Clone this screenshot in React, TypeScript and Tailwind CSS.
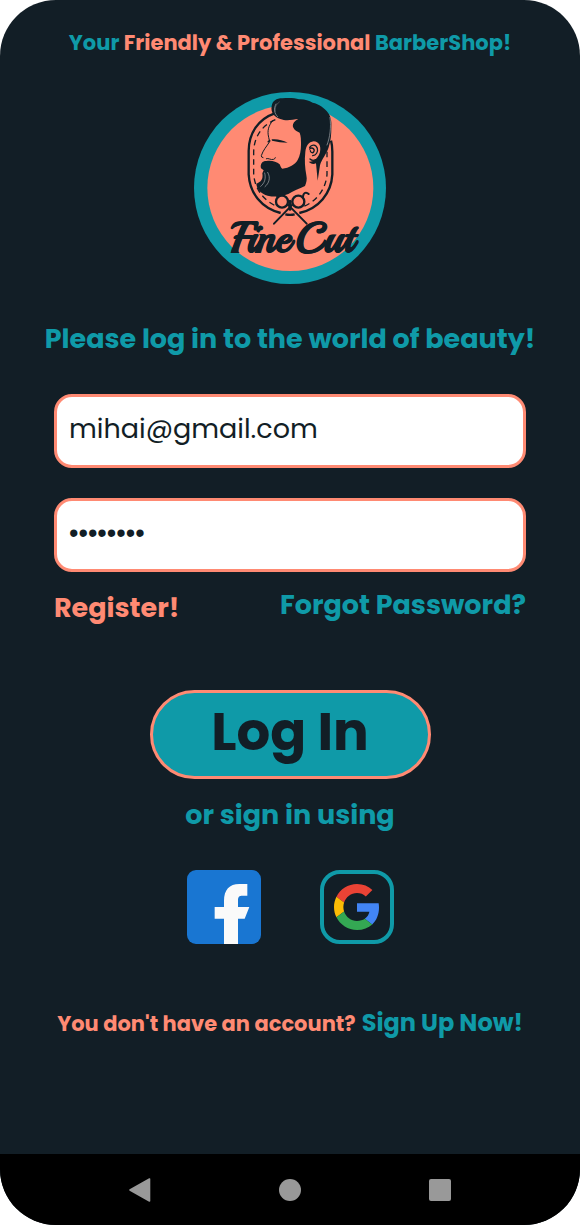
import React, { useState } from "react";

function Logo() {
  return (
    <svg viewBox="42 36 576 576" className="h-48 w-48" role="img" aria-label="FineCut barber shop">
      <circle cx="330" cy="324" r="288" fill="#0f9aa8" />
      <circle cx="331" cy="324" r="249" fill="#ff8a73" />
      {/* badge frame */}
      <g fill="none" stroke="#121e26">
        <path
          d="M284 100C235 117 206 160 206 213V283C209 340 245 385 302 399M453 182C457 196 457 205 457 215V283C454 340 416 386 358 399M316 403Q330 406 344 403"
          strokeWidth="7"
        />
        <path
          d="M286 119C244 137 221 173 221 218V283C224 325 250 362 290 379M441 215V283C438 325 412 362 372 379"
          strokeWidth="4"
          strokeDasharray="17 12"
        />
      </g>
      {/* hair and beard */}
      <path
        fill="#121e26"
        d="M275 78C277 63 289 55 307 55C326 53 345 54 357 58C372 57 386 61 398 68C417 72 434 84 444 98C454 112 455 126 454 142C454 162 453 181 446 202C439 224 425 238 420 256L413 302L408 250C398 254 391 250 386 245C404 246 415 232 420 216C424 198 417 185 401 184C386 186 378 198 376 216C373 241 375 264 379 286C382 298 379 309 375 318C357 326 341 333 325 342C306 350 284 352 263 347C243 341 230 328 229 311C243 306 250 298 247 280L251 271L243 265C240 251 247 243 259 243C273 240 289 244 299 253C302 260 303 264 307 266C328 264 345 254 353 240C360 229 363 211 363 195C363 180 363 168 359 158C352 155 343 151 339 141C337 131 344 122 355 117C337 119 319 124 301 117C285 112 271 99 275 78Z"
      />
      {/* ear */}
      <g fill="none" stroke="#121e26" strokeLinecap="round">
        <path d="M389 202C395 192 408 193 412 205C415 216 408 226 398 227M389 207C397 200 406 208 401 216C397 221 391 216 391 212" strokeWidth="4" />
        <path d="M390 237C394 241 401 242 407 239" strokeWidth="4" />
      </g>
      {/* face */}
      <g fill="none" stroke="#121e26" strokeLinecap="round" strokeLinejoin="round">
        <path d="M278 122C266 137 261 151 266 172L269 185C260 199 249 211 244 227Q243 232 249 233M259 236C266 233 272 241 281 238Q285 237 286 233" strokeWidth="3" />
        <path d="M265 185L269 182" strokeWidth="5" />
      </g>
      <path fill="#121e26" d="M275 178C290 176 308 180 323 188C307 187 292 186 276 182Z" />
      {/* highlights */}
      <g fill="none" stroke="#a9aaae" strokeLinecap="round">
        <path d="M288 72C280 86 283 101 293 110" strokeWidth="2" />
        <path d="M298 66C287 74 284 84 286 94" strokeWidth="1" />
        <path d="M450 112C454 141 450 172 441 195" strokeWidth="2" />
        <path d="M254 279C259 296 253 311 242 319M263 277C273 293 267 310 255 320" strokeWidth="2" />
      </g>
      {/* scissors */}
      <g fill="none" stroke="#121e26" strokeLinecap="round">
        <circle cx="306" cy="365" r="18" strokeWidth="7" fill="#ff8a73" />
        <circle cx="355" cy="365" r="18" strokeWidth="7" fill="#ff8a73" />
        <path d="M292 350C291 337 281 335 274 342M369 350C370 337 379 335 386 342" strokeWidth="6" />
        <path d="M323 373L380 431M338 373L282 431" strokeWidth="6" />
        <path d="M330 364V388" strokeWidth="9" />
      </g>
      <text
        x="338"
        y="517"
        textAnchor="middle"
        fill="#121e26"
        stroke="#121e26"
        strokeWidth="2"
        className="font-['Playball','Oleo_Script','Courgette','Kaushan_Script','Lobster','Liberation_Serif',serif] text-[128px] font-bold"
      >
        FineCut
      </text>
    </svg>
  );
}

function FacebookIcon() {
  return (
    <svg viewBox="0 0 222 222" className="h-[74px] w-[74px]" aria-hidden="true">
      <rect width="222" height="222" rx="27" fill="#1976d2" />
      <path
        fill="#fafafa"
        d="M111 222V146H83V111H111V92C111 60 127 42 157 42H181V77H167C156 77 153 81 153 91V111H187L173 146H153V222Z"
      />
    </svg>
  );
}

function GoogleIcon() {
  return (
    <svg viewBox="0 0 48 48" className="h-[46px] w-[46px]" aria-hidden="true">
      <path fill="#ea4335" d="M24 9.5c3.54 0 6.71 1.22 9.21 3.6l6.85-6.85C35.9 2.38 30.47 0 24 0 14.62 0 6.51 5.38 2.56 13.22l7.98 6.19C12.43 13.72 17.74 9.5 24 9.5z" />
      <path fill="#4285f4" d="M46.98 24.55c0-1.57-.15-3.09-.38-4.55H24v9.02h12.94c-.58 2.96-2.26 5.48-4.78 7.18l7.73 6c4.51-4.18 7.09-10.36 7.09-17.65z" />
      <path fill="#fbbc05" d="M10.53 28.59c-.48-1.45-.76-2.99-.76-4.59s.27-3.14.76-4.59l-7.98-6.19C.92 16.46 0 20.12 0 24c0 3.88.92 7.54 2.56 10.78l7.97-6.19z" />
      <path fill="#34a853" d="M24 48c6.48 0 11.93-2.13 15.89-5.81l-7.73-6c-2.15 1.45-4.92 2.3-8.16 2.3-6.26 0-11.57-4.22-13.47-9.91l-7.98 6.19C6.51 42.62 14.62 48 24 48z" />
    </svg>
  );
}

const fieldClass =
  "h-[74px] w-full rounded-[18px] border-[3px] border-[#ff8a73] bg-white px-3 pb-1 font-normal text-[#121e26] outline-none";

export default function App() {
  const [email, setEmail] = useState("mihai@gmail.com");
  const [password, setPassword] = useState("barber12");

  return (
    <div className="flex min-h-screen flex-col overflow-hidden rounded-[56px] bg-[#121e26] font-[Poppins,Inter,sans-serif] font-bold text-[#0f9aa8]">
      <main className="flex flex-1 flex-col items-center">
        <p className="mt-[27px] text-[21px] leading-8 whitespace-nowrap">
          Your <span className="text-[#ff8a73]">Friendly &amp; Professional</span> BarberShop!
        </p>
        <div className="mt-[33px]">
          <Logo />
        </div>
        <h1 className="mt-[35px] text-[27px] leading-10 whitespace-nowrap">Please log in to the world of beauty!</h1>

        <form className="mt-[35px] flex w-full flex-col items-center px-[54px]" onSubmit={(e) => e.preventDefault()}>
          <input
            type="email"
            aria-label="Email"
            className={fieldClass + " text-[27px]"}
            value={email}
            onChange={(e) => setEmail(e.target.value)}
          />
          <input
            type="password"
            aria-label="Password"
            className={fieldClass + " mt-[30px] font-['Liberation_Sans',sans-serif] text-[27px]"}
            value={password}
            onChange={(e) => setPassword(e.target.value)}
          />
          <div className="mt-[14px] flex w-full items-center justify-between text-[27px] leading-9">
            <a href="#register" className="pt-1 text-[#ff8a73]">Register!</a>
            <a href="#forgot" className="pb-0.5">Forgot Password?</a>
          </div>
          <button
            type="submit"
            className="mt-16 flex h-[89px] w-[281px] items-center justify-center rounded-full border-[3px] border-[#ff8a73] bg-[#0f9aa8] pb-1.5 text-[53px] text-[#121e26]"
          >
            Log In
          </button>
        </form>

        <p className="mt-4 text-[27px] leading-10">or sign in using</p>
        <div className="mt-[35px] flex gap-[59px]">
          <button type="button" aria-label="Sign in with Facebook">
            <FacebookIcon />
          </button>
          <button
            type="button"
            aria-label="Sign in with Google"
            className="flex h-[74px] w-[74px] items-center justify-center rounded-[20px] border-4 border-[#0f9aa8]"
          >
            <GoogleIcon />
          </button>
        </div>
        <p className="mt-[59px] mb-8 flex items-baseline gap-1.5 leading-10 whitespace-nowrap">
          <span className="text-[21px] text-[#ff8a73]">You don't have an account?</span>
          <a href="#signup" className="text-[24px]">Sign Up Now!</a>
        </p>
      </main>

      <nav aria-label="System" className="flex h-[71px] items-center justify-center gap-32 bg-black">
        <button type="button" aria-label="Back">
          <svg viewBox="0 0 22 24" className="h-6 w-[22px]" aria-hidden="true">
            <path d="M1 12L20.5 1V23Z" fill="#999" stroke="#999" strokeWidth="1.6" strokeLinejoin="round" />
          </svg>
        </button>
        <button type="button" aria-label="Home" className="h-[22px] w-[22px] rounded-full bg-[#999999]" />
        <button type="button" aria-label="Recent apps" className="h-[22px] w-[22px] rounded-xs bg-[#999999]" />
      </nav>
    </div>
  );
}
